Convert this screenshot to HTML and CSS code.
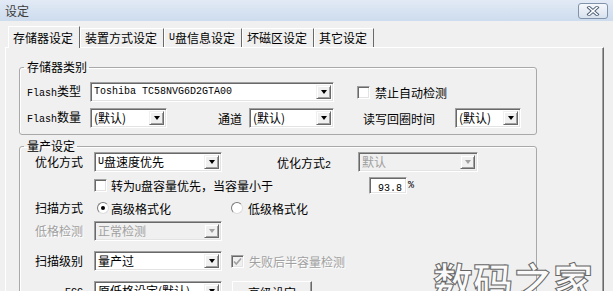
FILE: index.html
```html
<!DOCTYPE html>
<html lang="zh-CN">

<head>
    <meta charset="UTF-8">
    <meta name="viewport" content="width=device-width, initial-scale=1.0">
    <title>设定</title>
    <link rel="stylesheet" href="styles.css">
</head>

<body>
    <div class="window">
        <div class="titlebar">
            <span class="title">设定</span>
            <div class="close-btn">
                <svg width="14" height="10" viewBox="0 0 14 10">
                    <path d="M3 1.5 L11 8.5 M11 1.5 L3 8.5" stroke="#4b5d74" stroke-width="3.4" stroke-linecap="square" />
                    <path d="M3 1.5 L11 8.5 M11 1.5 L3 8.5" stroke="#fff" stroke-width="1.6" stroke-linecap="square" />
                </svg>
            </div>
        </div>

        <div class="tabs">
            <div class="tab active">存储器设定</div>
            <div class="tab">装置方式设定</div>
            <div class="tab"><span class="lat">U</span>盘信息设定</div>
            <div class="tab">坏磁区设定</div>
            <div class="tab">其它设定</div>
        </div>

        <div class="page">
            <!-- 存储器类别 -->
            <fieldset class="group group-flash">
                <legend>存储器类别</legend>
                <div class="group-body">
                    <div class="row">
                        <span class="label label-flash"><span class="lat">Flash</span>类型</span>
                        <div class="combo combo-type">
                            <span class="combo-text lat">Toshiba TC58NVG6D2GTA00</span>
                            <span class="combo-btn"></span>
                        </div>
                        <span class="check check-auto"></span>
                        <span class="check-text">禁止自动检测</span>
                    </div>
                    <div class="row row-count">
                        <span class="label label-flash"><span class="lat">Flash</span>数量</span>
                        <div class="combo combo-count">
                            <span class="combo-text">(默认)</span>
                            <span class="combo-btn"></span>
                        </div>
                        <span class="text-channel">通道</span>
                        <div class="combo combo-channel">
                            <span class="combo-text">(默认)</span>
                            <span class="combo-btn"></span>
                        </div>
                        <span class="text-loop">读写回圈时间</span>
                        <div class="combo combo-loop">
                            <span class="combo-text">(默认)</span>
                            <span class="combo-btn"></span>
                        </div>
                    </div>
                </div>
            </fieldset>

            <!-- 量产设定 -->
            <fieldset class="group group-produce">
                <legend>量产设定</legend>
                <div class="group-body">
                    <div class="row">
                        <span class="label">优化方式</span>
                        <div class="combo combo-main">
                            <span class="combo-text"><span class="lat">U</span>盘速度优先</span>
                            <span class="combo-btn"></span>
                        </div>
                        <span class="text-opt2">优化方式<span class="lat">2</span></span>
                        <div class="combo combo-opt2 disabled">
                            <span class="combo-text">默认</span>
                            <span class="combo-btn"></span>
                        </div>
                    </div>
                    <div class="row row-conv">
                        <span class="label"></span>
                        <span class="check"></span>
                        <span class="conv-text">转为<span class="lat">U</span>盘容量优先，当容量小于</span>
                        <div class="num"><span class="lat">93.8</span></div>
                        <span class="lat pct">%</span>
                    </div>
                    <div class="row row-scan">
                        <span class="label">扫描方式</span>
                        <span class="radio checked"></span>
                        <span class="radio-text">高级格式化</span>
                        <span class="radio radio-low"></span>
                        <span class="radio-text">低级格式化</span>
                    </div>
                    <div class="row row-lowcheck">
                        <span class="label muted">低格检测</span>
                        <div class="combo combo-main disabled">
                            <span class="combo-text">正常检测</span>
                            <span class="combo-btn"></span>
                        </div>
                    </div>
                    <div class="row row-level">
                        <span class="label">扫描级别</span>
                        <div class="combo combo-main">
                            <span class="combo-text">量产过</span>
                            <span class="combo-btn"></span>
                        </div>
                        <span class="check check-half disabled">
                            <svg width="11" height="11" viewBox="0 0 11 11">
                                <path d="M2 5.5 L4.3 8 L9 2.5" fill="none" stroke="#a0a0a0" stroke-width="1.6" />
                            </svg>
                        </span>
                        <span class="check-text muted">失败后半容量检测</span>
                    </div>
                    <div class="row row-ecc">
                        <span class="label label-ecc"><span class="lat">ECC</span></span>
                        <div class="combo combo-main">
                            <span class="combo-text">原低格设定(默认)</span>
                            <span class="combo-btn"></span>
                        </div>
                        <div class="button">高级设定</div>
                    </div>
                </div>
            </fieldset>
        </div>

        <div class="watermark">数码之家</div>
    </div>
</body>

</html>
```

FILE: styles.css
```css
* {
    box-sizing: border-box;
}

body {
    margin: 0;
    font-family: "Noto Sans CJK SC", sans-serif;
    font-size: 12px;
    color: #000;
}

.lat {
    font-family: "Liberation Mono", monospace;
    font-size: 10px;
}

.window {
    position: relative;
    width: 613px;
    height: 291px;
    overflow: hidden;
    background: #f0f0f0;
}

/* title bar */
.titlebar {
    height: 21px;
    display: flex;
    align-items: center;
    padding: 0 5px;
    background: linear-gradient(#e2eaf5, #cddcee);
}

.title {
    color: #3d3d3d;
    line-height: 12px;
}

.close-btn {
    margin-left: auto;
    width: 30px;
    height: 16px;
    border: 1px solid #8193ab;
    border-radius: 3px;
    background: linear-gradient(#f5f8fb, #d8e2ed);
    display: flex;
    align-items: center;
    justify-content: center;
}

/* tabs */
.tabs {
    display: flex;
    align-items: flex-end;
    height: 21px;
    margin-top: 5px;
    padding-left: 8px;
}

.tab {
    height: 19px;
    padding: 0 6px 0 4px;
    border-left: 1px solid #fff;
    border-top: 1px solid #fff;
    border-right: 1px solid #696969;
    display: flex;
    align-items: center;
    line-height: 12px;
    white-space: nowrap;
}

.tab.active {
    position: relative;
    height: 22px;
    margin-bottom: -1px;
    background: #f0f0f0;
}

.page {
    margin-left: 5px;
    width: 599px;
    height: 244px;
    border-top: 1px solid #fff;
    border-left: 1px solid #fff;
    border-right: 1px solid #696969;
    box-shadow: inset -1px 0 #a0a0a0;
    padding: 13px 0 0 13px;
}

/* group boxes */
.group {
    margin: 0;
    padding: 0;
    width: 518px;
    border: 1px solid #a9a9a9;
    border-radius: 3px;
    box-shadow: inset 1px 1px #fff;
}

.group legend {
    margin-left: 4px;
    padding: 0 2px 0 3px;
    line-height: 12px;
}

.group-flash .group-body {
    padding: 9px 0 6px 7px;
}

.group-produce {
    margin-top: 5px;
    height: 200px;
}

.group-produce .group-body {
    padding: 0 0 0 15px;
}

.row {
    display: flex;
    align-items: center;
    height: 20px;
    white-space: nowrap;
}

.row-count {
    margin-top: 6px;
}

.row-conv,
.row-scan,
.row-lowcheck {
    margin-top: 3px;
}

.row-level,
.row-ecc {
    margin-top: 10px;
}

.label {
    width: 59px;
    flex-shrink: 0;
    line-height: 12px;
}

.label-flash {
    width: 63px;
}

.label-ecc {
    text-align: right;
    padding-right: 11px;
}

.muted {
    color: #a0a0a0;
    text-shadow: 1px 1px #fff;
}

/* combo boxes */
.combo {
    height: 20px;
    display: flex;
    padding: 2px;
    background: #fff;
    border: 1px solid;
    border-color: #a0a0a0 #fff #fff #a0a0a0;
    box-shadow: inset 1px 1px #696969, inset -1px -1px #e3e3e3;
    flex-shrink: 0;
}

.combo-text {
    flex: 1;
    display: flex;
    align-items: center;
    padding-left: 1px;
    line-height: 12px;
}

.combo-btn {
    width: 15px;
    background: #f0f0f0;
    border: 1px solid;
    border-color: #f0f0f0 #696969 #696969 #f0f0f0;
    box-shadow: inset 1px 1px #fff, inset -1px -1px #a0a0a0;
    display: flex;
    align-items: center;
    justify-content: center;
}

.combo-btn::after {
    content: "";
    border-left: 3px solid transparent;
    border-right: 3px solid transparent;
    border-top: 4px solid #000;
}

.combo.disabled {
    background: #f0f0f0;
    color: #a0a0a0;
}

.combo.disabled .combo-btn::after {
    border-top-color: #a0a0a0;
}

.combo-type {
    width: 244px;
}

.combo-count {
    width: 77px;
}

.combo-channel {
    width: 85px;
    margin-left: 7px;
}

.combo-loop {
    width: 66px;
    margin-left: 20px;
}

.combo-main {
    width: 128px;
}

.combo-opt2 {
    width: 120px;
    margin-left: 27px;
}

.text-channel {
    margin-left: 51px;
}

.text-loop {
    margin-left: 29px;
}

.text-opt2 {
    margin-left: 55px;
}

/* check boxes and radios */
.check {
    width: 13px;
    height: 13px;
    flex-shrink: 0;
    background: #fff;
    border: 1px solid;
    border-color: #a0a0a0 #fff #fff #a0a0a0;
    box-shadow: inset 1px 1px #696969, inset -1px -1px #e3e3e3;
    display: flex;
}

.check.disabled {
    background: #f0f0f0;
}

.check-auto {
    margin-left: 23px;
}

.check-half {
    margin-left: 9px;
}

.check-text {
    margin-left: 5px;
}

.conv-text {
    margin-left: 4px;
}

.num {
    width: 38px;
    height: 17px;
    margin-left: 96px;
    padding-right: 4px;
    background: #fff;
    border: 1px solid;
    border-color: #a0a0a0 #fff #fff #a0a0a0;
    box-shadow: inset 1px 1px #696969, inset -1px -1px #e3e3e3;
    text-align: right;
    line-height: 15px;
}

.pct {
    margin-left: 1px;
    line-height: 12px;
    padding-top: 2px;
}

.radio {
    position: relative;
    width: 12px;
    height: 12px;
    margin-left: 3px;
    flex-shrink: 0;
    border-radius: 50%;
    background: #fff;
    border: 1px solid;
    border-color: #7a7a7a #dcdcdc #dcdcdc #7a7a7a;
}

.radio.checked::after {
    content: "";
    position: absolute;
    left: 3px;
    top: 3px;
    width: 4px;
    height: 4px;
    border-radius: 50%;
    background: #000;
}

.radio-low {
    margin-left: 60px;
}

.radio-text {
    margin-left: 2px;
}

.radio-low + .radio-text {
    margin-left: 5px;
}

.button {
    width: 80px;
    height: 22px;
    margin-left: 10px;
    margin-top: 2px;
    background: #f0f0f0;
    border: 1px solid;
    border-color: #fff #696969 #696969 #fff;
    box-shadow: inset -1px -1px #a0a0a0;
    display: flex;
    align-items: center;
    justify-content: center;
}

/* site watermark laid over the dialog */
.watermark {
    position: absolute;
    left: 433px;
    top: 260px;
    font-size: 40px;
    font-weight: 700;
    line-height: 1;
    color: #fafafa;
    -webkit-text-stroke: 1px #666;
    white-space: nowrap;
}
```
